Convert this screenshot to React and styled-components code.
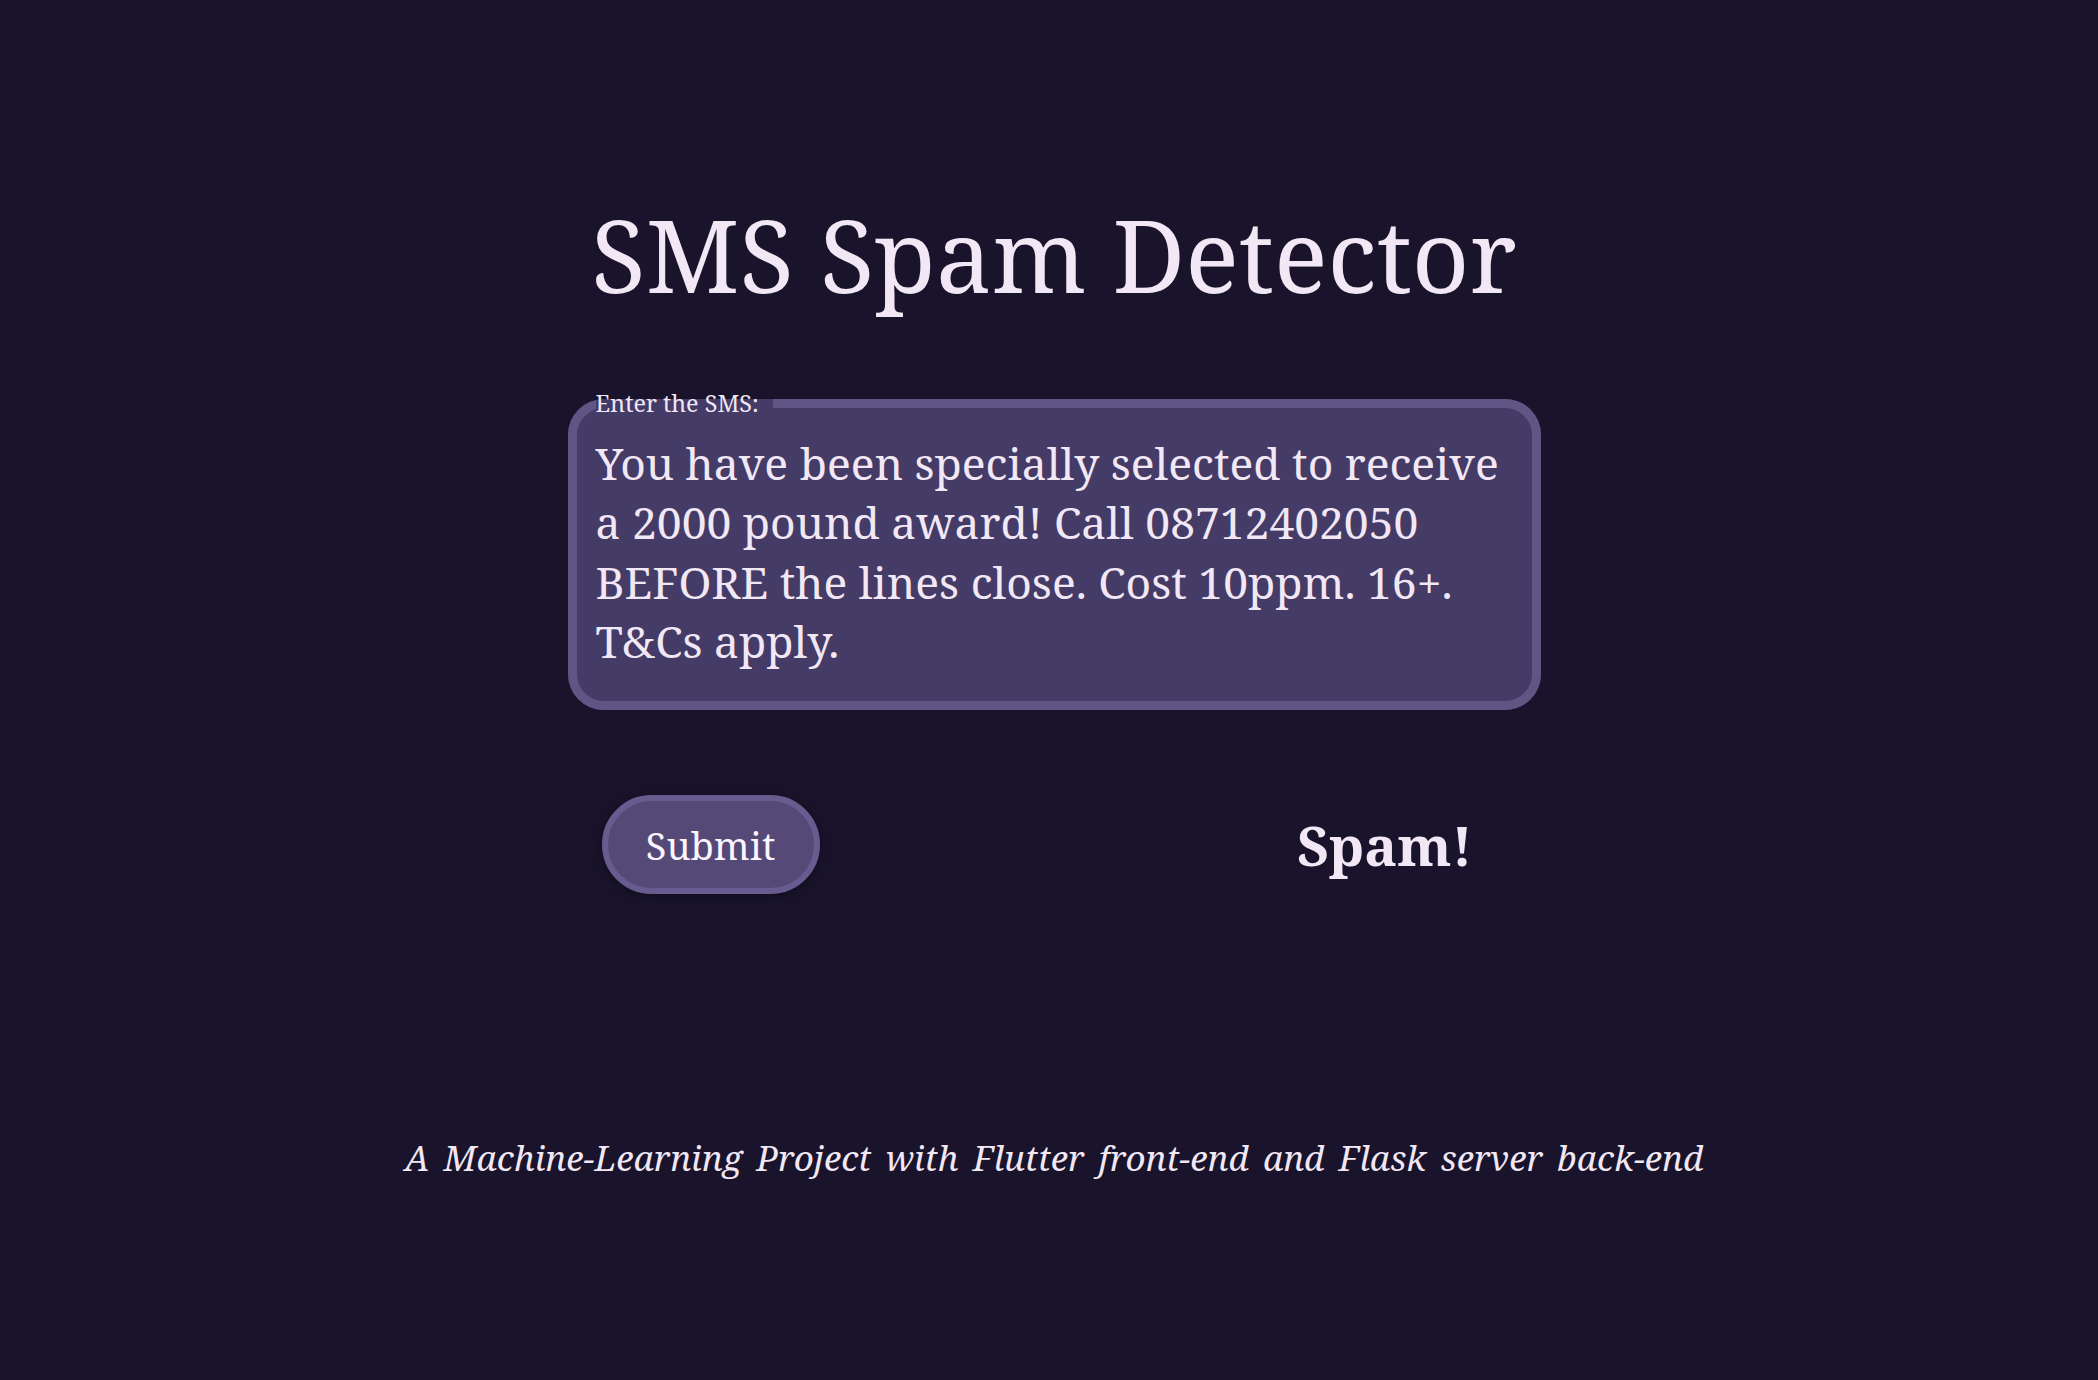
import React from 'react';
import styled, { createGlobalStyle } from 'styled-components';

const GlobalStyle = createGlobalStyle`
    html, body {
        margin: 0;
        padding: 0;
        background: #19142b;
    }
    body {
        font-family: "Noto Serif", "DejaVu Serif", serif;
        color: #f2e7f4;
    }
`;

const Page = styled.main`
    min-height: 1380px;
    display: flex;
    flex-direction: column;
    align-items: center;
    padding: 194px 0 0 10px;
    box-sizing: border-box;
`;

const Title = styled.h1`
    margin: 0;
    font-size: 100px;
    font-weight: normal;
    line-height: 120px;
`;

const Column = styled.div`
    width: 973px;
    margin-top: 77px;
`;

const InputBox = styled.fieldset`
    margin: 0;
    padding: 19px 28px 30px 19px;
    border: 9px solid #605584;
    border-radius: 36px;
    background: #443b67;
    min-width: 0;
`;

const Label = styled.legend`
    padding: 0 14px 0 0;
    font-size: 23.4px;
    line-height: 24px;
`;

const Message = styled.div`
    font-size: 44.4px;
    line-height: 59.3px;
`;

const ActionRow = styled.div`
    display: flex;
    align-items: center;
    justify-content: space-between;
    margin-top: 85px;
    padding: 0 68px 0 34px;
`;

const SubmitButton = styled.button`
    width: 218px;
    height: 99px;
    padding: 0;
    border-radius: 50px;
    border: 6px solid #675b90;
    background: #554a77;
    color: #fbf5ff;
    font-family: inherit;
    font-size: 38px;
    box-shadow: 0 2px 12px rgba(0, 0, 0, 0.35);
    cursor: pointer;
`;

const Verdict = styled.div`
    font-size: 55px;
    font-weight: bold;
`;

const Footer = styled.p`
    margin: 240px 0 0;
    font-size: 35px;
    line-height: 48px;
    font-style: italic;
    word-spacing: 5.1px;
`;

const App = () => {
    return (
        <>
            <GlobalStyle />
            <Page>
                <Title>SMS Spam Detector</Title>
                <Column>
                    <InputBox>
                        <Label>Enter the SMS:</Label>
                        <Message>
                            You have been specially selected to receive a 2000 pound award! Call 08712402050 BEFORE the lines close. Cost 10ppm. 16+. T&amp;Cs apply.
                        </Message>
                    </InputBox>
                    <ActionRow>
                        <SubmitButton>Submit</SubmitButton>
                        <Verdict>Spam!</Verdict>
                    </ActionRow>
                </Column>
                <Footer>A Machine-Learning Project with Flutter front-end and Flask server back-end</Footer>
            </Page>
        </>
    );
};

export default App;
